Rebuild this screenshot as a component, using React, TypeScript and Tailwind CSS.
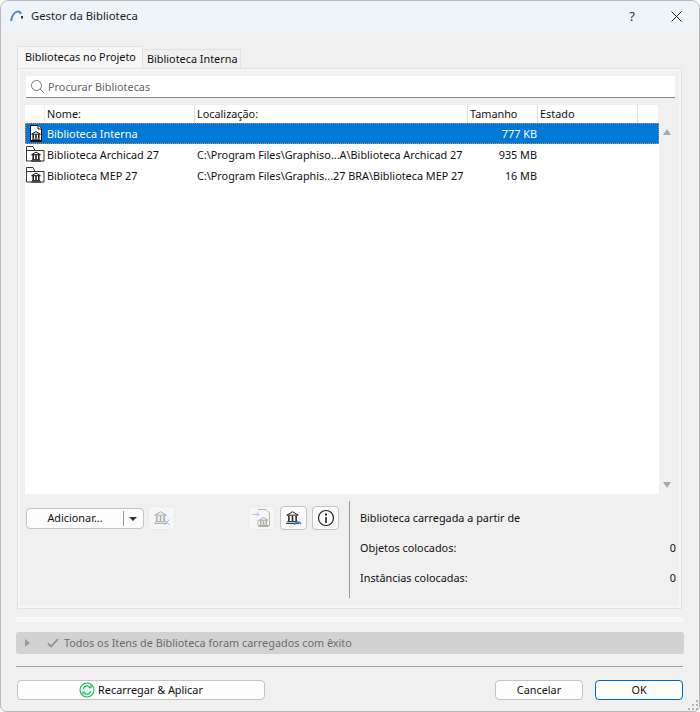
const font = "font-['Noto_Sans','Open_Sans',sans-serif] text-[10.85px] leading-none text-[#111]";

const columns = "grid grid-cols-[20px_150px_273px_70px_100px_20px]";

type Row = { name: string; path: string; size: string; kind: "file" | "folder"; selected?: boolean };

const rows: Row[] = [
  { name: "Biblioteca Interna", path: "", size: "777 KB", kind: "file", selected: true },
  {
    name: "Biblioteca Archicad 27",
    path: "C:\\Program Files\\Graphiso...A\\Biblioteca Archicad 27",
    size: "935 MB",
    kind: "folder",
  },
  {
    name: "Biblioteca MEP 27",
    path: "C:\\Program Files\\Graphis...27 BRA\\Biblioteca MEP 27",
    size: "16 MB",
    kind: "folder",
  },
];

// 10x10 bank glyph, scaled up for the toolbar buttons
function Bank({ color = "#111", x = 0, y = 0, scale = 1 }: { color?: string; x?: number; y?: number; scale?: number }) {
  return (
    <g transform={`translate(${x} ${y}) scale(${scale})`} stroke={color} fill="none" strokeWidth={1 / scale}>
      <path d="M.6 3.2 L5 .6 L9.4 3.2 Z" />
      <path d="M2.2 3.6 V7.6 M5 3.6 V7.6 M7.8 3.6 V7.6" strokeWidth={1.5 / scale} />
      <path d="M1 8.2 H9 M0 9.5 H10" />
    </g>
  );
}

function RowIcon({ kind }: { kind: "file" | "folder" }) {
  if (kind === "file") {
    return (
      <svg width="14" height="18" viewBox="0 0 14 18" className="ml-[4px]">
        <path d="M1.5 .5 H9 L12.5 4 V16.5 H1.5 Z" fill="#fff" stroke="#111" />
        <path d="M9 .5 V4 H12.5" fill="#fff" stroke="#111" />
        <Bank x={2} y={6} />
      </svg>
    );
  }
  return (
    <svg width="19" height="16" viewBox="0 0 19 16" className="-mt-[2px] ml-[1px]">
      <path d="M.5 15 V.5 H7 L9 4.5 H18 V15 Z" fill="#fff" stroke="#333" />
      <path d="M.5 4.5 H9" stroke="#333" fill="none" />
      <Bank x={5} y={5.5} />
    </svg>
  );
}

function TitleLogo() {
  return (
    <svg width="14" height="12" viewBox="0 0 14 12">
      <path d="M1 11 C2 5 5 1.5 8 1.5 C9.5 1.5 10.5 2.5 11 4" fill="none" stroke="#5b80d8" strokeWidth="2" />
      <rect x="11" y="6" width="2" height="2.5" fill="#333" />
    </svg>
  );
}

function ToolButton({ children, disabled }: { children: React.ReactNode; disabled?: boolean }) {
  return (
    <div
      className={
        disabled
          ? "flex h-[24px] w-[27px] items-center justify-center rounded-[4px] border border-[#ececec] bg-[#f6f6f6]"
          : "flex h-[24px] w-[27px] items-center justify-center rounded-[4px] border border-[#c4c4c4] bg-[#fbfbfb]"
      }
    >
      {children}
    </div>
  );
}

function DialogButton({
  children,
  className,
}: {
  children: React.ReactNode;
  className: string;
}) {
  return (
    <div className={`flex h-[20px] items-center justify-center rounded-[4px] border bg-[#fdfdfd] ${className}`}>
      {children}
    </div>
  );
}

function InfoLine({ label, value }: { label: string; value?: string }) {
  return (
    <div className="flex h-[30px] items-center justify-between">
      <span>{label}</span>
      {value && <span>{value}</span>}
    </div>
  );
}

export default function App() {
  return (
    <div className={`relative flex h-[712px] w-[700px] flex-col overflow-hidden rounded-t-[8px] rounded-b-[6px] border border-[#b9b9b9] bg-[#f0f0f0] ${font}`}>
      <div className="flex h-[30px] shrink-0 items-center bg-[#eff4f9] pl-[9px]">
        <TitleLogo />
        <span className="ml-[7px] text-[11.3px] text-[#222]">Gestor da Biblioteca</span>
        <span className="ml-auto text-[13px] text-[#333]">?</span>
        <svg width="11" height="11" viewBox="0 0 11 11" className="mr-[17px] ml-[36px]">
          <path d="M.5 .5 L10.5 10.5 M10.5 .5 L.5 10.5" stroke="#222" fill="none" />
        </svg>
      </div>

      <div className="flex min-h-0 flex-1 flex-col px-[15px]">
        <div className="mt-[15px] flex h-[22px] items-end pl-[1px]">
          <div className="flex h-[22px] w-[126px] items-center rounded-t-[2px] border border-b-0 border-[#e2e2e2] bg-[#f6f6f6] pb-[1px] pl-[7px] text-[#111]">
            Bibliotecas no Projeto
          </div>
          <div className="flex h-[19px] w-[98px] items-center rounded-t-[2px] border border-b-0 border-l-0 border-[#e2e2e2] bg-[#f0f0f0] pl-[4px] text-[#111]">
            Biblioteca Interna
          </div>
        </div>

        <div className="ml-[1px] flex h-[541px] w-[665px] flex-col border border-[#e2e2e2] pt-[7px] shadow-[inset_0_0_0_2px_#f6f6f6]">
          <div className="mr-[6px] ml-[8px] flex h-[22px] shrink-0 items-center border-b border-[#8a8a8a] bg-white pl-[4px] text-[#666]">
            <svg width="15" height="15" viewBox="0 0 15 15">
              <circle cx="6.5" cy="6.5" r="5" fill="none" stroke="#777" />
              <path d="M10 10 L14 14" stroke="#777" />
            </svg>
            <span className="ml-[3px] pt-[1px]">Procurar Bibliotecas</span>
          </div>

          <div className="mt-[7px] ml-[7px] flex h-[389px] w-[649px] shrink-0">
            <div className="flex w-[634px] flex-col bg-white">
              <div className={`${columns} h-[18px] shrink-0 bg-[#f0f0f0]`}>
                <div className="border-r border-[#f0f0f0] bg-white" />
                <div className="flex items-center border-r border-[#e2e2e2] bg-white pl-[2px]">Nome:</div>
                <div className="flex items-center border-r border-[#e2e2e2] bg-white pl-[2px]">Localização:</div>
                <div className="flex items-center border-r border-[#e2e2e2] bg-white pl-[2px]">Tamanho</div>
                <div className="flex items-center border-r border-[#e2e2e2] bg-white pl-[2px]">Estado</div>
                <div className="bg-white" />
              </div>
              {rows.map((row) => (
                <div
                  key={row.name}
                  className={
                    row.selected
                      ? `${columns} h-[21px] items-center bg-[#0078d7] pt-[1px] text-white outline outline-offset-[-1px] outline-dotted outline-[#e08a3c]`
                      : `${columns} h-[21px] items-center pt-[1px]`
                  }
                >
                  <RowIcon kind={row.kind} />
                  <span className="pl-[2px]">{row.name}</span>
                  <span className="pl-[2px] whitespace-nowrap">{row.path}</span>
                  <span className="pr-[1px] text-right">{row.size}</span>
                </div>
              ))}
            </div>
            <div className="flex flex-1 flex-col items-center justify-between pt-[24px] pb-[6px]">
              <div className="h-0 w-0 border-x-[4px] border-b-[6px] border-x-transparent border-b-[#a8a8a8]" />
              <div className="h-0 w-0 border-x-[4px] border-t-[6px] border-x-transparent border-t-[#a8a8a8]" />
            </div>
          </div>

          <div className="ml-[8px] flex min-h-0 flex-1 pt-[7px]">
            <div className="flex w-[323px] items-start pt-[5px]">
              <div className="mt-[2px] flex h-[21px] w-[118px] items-center rounded-[4px] border border-[#c4c4c4] bg-[#fdfdfd]">
                <span className="w-[96px] text-center">Adicionar...</span>
                <div className="h-[15px] w-px bg-[#999]" />
                <div className="ml-[5px] h-0 w-0 border-x-[4px] border-t-[4px] border-x-transparent border-t-[#333]" />
              </div>
              <div className="ml-[4px]">
                <ToolButton disabled>
                  <svg width="18" height="18" viewBox="0 0 18 18">
                    <Bank color="#a9a9a9" x={1} y={2} scale={1.3} />
                    <path d="M11 10.5 L16.5 16 M16.5 10.5 L11 16" stroke="#8fbdf0" />
                  </svg>
                </ToolButton>
              </div>
              <div className="ml-[73px]">
                <ToolButton disabled>
                  <svg width="19" height="19" viewBox="0 0 19 19">
                    <path d="M6 .5 H14 L17.5 4 V16.5 H6 V11" fill="none" stroke="#b5b5b5" />
                    <path d="M.5 5.5 H7 M5 3.5 L7 5.5 L5 7.5" fill="none" stroke="#9cc4f4" />
                    <Bank color="#a9a9a9" x={6.5} y={8} scale={1} />
                  </svg>
                </ToolButton>
              </div>
              <div className="ml-[5px]">
                <ToolButton>
                  <svg width="18" height="18" viewBox="0 0 18 18">
                    <Bank color="#222" x={1} y={2} scale={1.3} />
                    <path d="M9.5 16 A3.4 3.4 0 0 1 16 15" fill="none" stroke="#3b82f6" strokeWidth="1.4" />
                  </svg>
                </ToolButton>
              </div>
              <div className="ml-[5px]">
                <ToolButton>
                  <svg width="18" height="18" viewBox="0 0 18 18">
                    <circle cx="9" cy="9" r="7.5" fill="none" stroke="#222" strokeWidth="1.2" />
                    <path d="M9 8 V14" stroke="#222" strokeWidth="1.6" />
                    <rect x="8" y="4.5" width="2" height="2" fill="#222" />
                  </svg>
                </ToolButton>
              </div>
            </div>
            <div className="flex h-[97px] flex-1 flex-col border-l border-[#9a9a9a] pt-[2px] pr-[5px] pl-[10px]">
              <InfoLine label="Biblioteca carregada a partir de" />
              <InfoLine label="Objetos colocados:" value="0" />
              <InfoLine label="Instâncias colocadas:" value="0" />
            </div>
          </div>
        </div>

        <div className="mt-[8px] h-[5px] w-[668px] shrink-0 bg-[#f8f8f8]" />

        <div className="mt-[10px] flex h-[22px] w-[668px] shrink-0 items-center rounded-[3px] bg-[#d2d2d2] pl-[9px] text-[#6f6a6a]">
          <div className="h-0 w-0 border-y-[4px] border-l-[5px] border-y-transparent border-l-[#9a9a9a]" />
          <svg width="12" height="10" viewBox="0 0 12 10" className="ml-[17px]">
            <path d="M1 5.5 L4 8.5 L11 1" fill="none" stroke="#8f8f8f" strokeWidth="1.8" />
          </svg>
          <span className="ml-[5px]">Todos os Itens de Biblioteca foram carregados com êxito</span>
        </div>

        <div className="mt-[12px] h-px w-[667px] shrink-0 bg-[#a0a0a0]" />

        <div className="mt-[13px] flex w-[667px] shrink-0 pl-[1px]">
          <DialogButton className="w-[248px] gap-[3px] border-[#c4c4c4]">
            <svg width="16" height="16" viewBox="0 0 16 16">
              <circle cx="8" cy="8" r="7" fill="#eafaf0" stroke="#19b45a" strokeWidth="1.1" />
              <path d="M4.5 7 A3.5 3.5 0 0 1 11 5.5 M11.5 9 A3.5 3.5 0 0 1 5 10.5" fill="none" stroke="#19b45a" strokeWidth="1.1" />
              <path d="M9.5 5.8 H12 V3.3 M6.5 10.2 H4 V12.7" fill="none" stroke="#19b45a" strokeWidth="1.1" />
            </svg>
            Recarregar & Aplicar
          </DialogButton>
          <DialogButton className="ml-auto w-[88px] border-[#c4c4c4]">Cancelar</DialogButton>
          <DialogButton className="ml-[12px] w-[88px] border-[#0067c0]">OK</DialogButton>
        </div>
      </div>

      <svg width="10" height="10" viewBox="0 0 10 10" className="absolute right-[1px] bottom-[1px]">
        <path d="M8 0 h2 v2 h-2 Z M4 4 h2 v2 h-2 Z M8 4 h2 v2 h-2 Z M0 8 h2 v2 h-2 Z M4 8 h2 v2 h-2 Z M8 8 h2 v2 h-2 Z" fill="#b5b5b5" />
      </svg>
    </div>
  );
}
